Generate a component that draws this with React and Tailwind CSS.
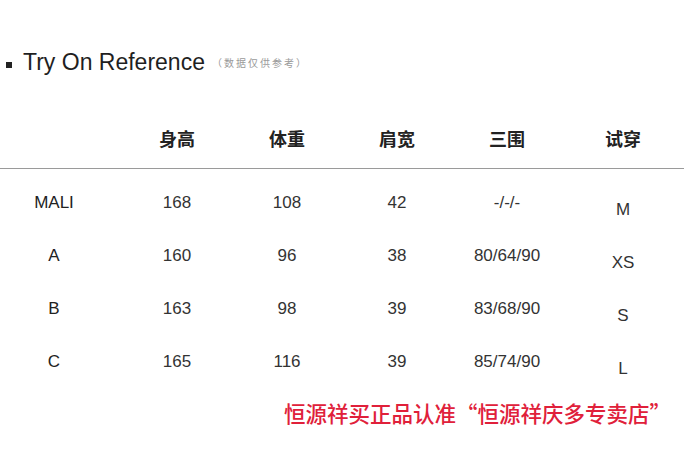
const HEADERS = ["身高", "体重", "肩宽", "三围", "试穿"];

const ROWS = [
  { name: "MALI", height: "168", weight: "108", shoulder: "42", bwh: "-/-/-", size: "M" },
  { name: "A", height: "160", weight: "96", shoulder: "38", bwh: "80/64/90", size: "XS" },
  { name: "B", height: "163", weight: "98", shoulder: "39", bwh: "83/68/90", size: "S" },
  { name: "C", height: "165", weight: "116", shoulder: "39", bwh: "85/74/90", size: "L" }
];

const FONT = "font-['Liberation_Sans','Noto_Sans_CJK_SC',sans-serif]";
const COLS = "grid grid-cols-[122px_110px_110px_110px_110px_1fr]";

export default function App() {
  return (
    <div className={`h-[449px] w-[684px] overflow-hidden bg-white text-[#222] ${FONT}`}>
      <div className="mt-[48px] flex h-[28px] items-center">
        <span className="ml-[6px] mt-[5px] h-[6px] w-[6px] bg-[#222]" />
        <span className="ml-[11px] text-[23px] leading-none text-[#1f1f1f]">
          Try On Reference
        </span>
        <span className="ml-[7px] mt-[4px] text-[10px] leading-none tracking-[2px] text-[#9a9a9a]">
          （数据仅供参考）
        </span>
      </div>

      <div className="mt-[42px] border-b border-[#9a9a9a] pb-[10px]">
        <div className={`${COLS} h-[40px] items-center`}>
          <div />
          {HEADERS.map((h) => (
            <div
              key={h}
              className="text-center font-['Noto_Sans_CJK_SC',sans-serif] text-[18px] font-bold leading-none text-[#222]"
            >
              {h}
            </div>
          ))}
        </div>
      </div>

      <div className="mt-[7px]">
        {ROWS.map((row) => (
          <div key={row.name} className={`${COLS} h-[53px] items-center text-[17px] leading-none`}>
            <div className="pr-[14px] text-center">{row.name}</div>
            <div className="text-center text-[#333]">{row.height}</div>
            <div className="text-center text-[#333]">{row.weight}</div>
            <div className="text-center text-[#333]">{row.shoulder}</div>
            <div className="text-center text-[#333]">{row.bwh}</div>
            <div className="pt-[14px] text-center text-[#333]">{row.size}</div>
          </div>
        ))}
      </div>

      <div className="mt-[10px] flex h-[30px] items-center justify-end pr-[13px]">
        <span className="font-['Noto_Sans_CJK_SC',sans-serif] text-[21.5px] font-medium leading-none text-[#e0203a]">
          恒源祥买正品认准“恒源祥庆多专卖店”
        </span>
      </div>
    </div>
  );
}
